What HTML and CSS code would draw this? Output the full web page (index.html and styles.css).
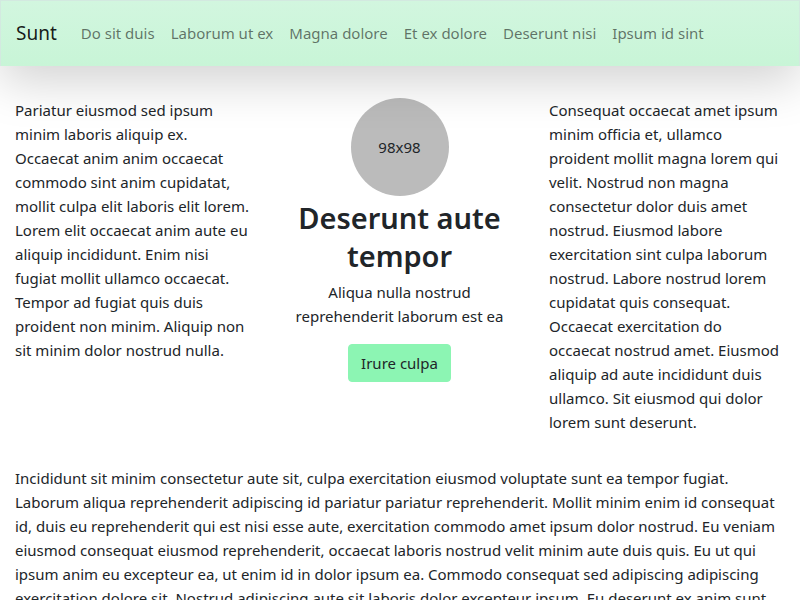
FILE: index.html
```html
<!DOCTYPE html>
<html lang="en">
<head>
<meta charset="utf-8">
<title>Sunt</title>
<link rel="stylesheet" href="styles.css">
</head>
<body>
<nav class="navbar">
  <a class="brand" href="#">Sunt</a>
  <ul class="nav">
    <li><a href="#">Do sit duis</a></li>
    <li><a href="#">Laborum ut ex</a></li>
    <li><a href="#">Magna dolore</a></li>
    <li><a href="#">Et ex dolore</a></li>
    <li><a href="#">Deserunt nisi</a></li>
    <li><a href="#">Ipsum id sint</a></li>
  </ul>
</nav>
<main class="page">
  <section class="cols">
    <p class="col-text">Pariatur eiusmod sed ipsum minim laboris aliquip ex. Occaecat anim anim occaecat commodo sint anim cupidatat, mollit culpa elit laboris elit lorem. Lorem elit occaecat anim aute eu aliquip incididunt. Enim nisi fugiat mollit ullamco occaecat. Tempor ad fugiat quis duis proident non minim. Aliquip non sit minim dolor nostrud nulla.</p>
    <div class="hero">
      <div class="avatar">98x98</div>
      <h1 class="hero-title">Deserunt aute tempor</h1>
      <p class="hero-sub">Aliqua nulla nostrud reprehenderit laborum est ea</p>
      <a class="btn" href="#">Irure culpa</a>
    </div>
    <p class="col-text">Consequat occaecat amet ipsum minim officia et, ullamco proident mollit magna lorem qui velit. Nostrud non magna consectetur dolor duis amet nostrud. Eiusmod labore exercitation sint culpa laborum nostrud. Labore nostrud lorem cupidatat quis consequat. Occaecat exercitation do occaecat nostrud amet. Eiusmod aliquip ad aute incididunt duis ullamco. Sit eiusmod qui dolor lorem sunt deserunt.</p>
  </section>
  <p class="body-text">Incididunt sit minim consectetur aute sit, culpa exercitation eiusmod voluptate sunt ea tempor fugiat. Laborum aliqua reprehenderit adipiscing id pariatur pariatur reprehenderit. Mollit minim enim id consequat id, duis eu reprehenderit qui est nisi esse aute, exercitation commodo amet ipsum dolor nostrud. Eu veniam eiusmod consequat eiusmod reprehenderit, occaecat laboris nostrud velit minim aute duis quis. Eu ut qui ipsum anim eu excepteur ea, ut enim id in dolor ipsum ea. Commodo consequat sed adipiscing adipiscing exercitation dolore sit. Nostrud adipiscing aute sit laboris dolor excepteur ipsum. Eu deserunt ex anim sunt nisi, cupidatat dolore aliqua ipsum sit elit.</p>
</main>
</body>
</html>
```
FILE: styles.css
```css
* { box-sizing: border-box; }
html, body { margin: 0; padding: 0; }
body {
  font-family: "Noto Sans", "Open Sans", sans-serif;
  font-size: 15px;
  line-height: 24px;
  color: #212529;
  background: #fff;
}
.navbar {
  display: flex;
  align-items: center;
  height: 66px;
  padding: 0 16px 1px 15px;
  border: 1px solid #d3e9e0;
  border-bottom: none;
  background: linear-gradient(#d2f6df, #c8f5d7);
  box-shadow: 0 16px 48px rgba(0, 0, 0, 0.175);
  position: relative;
  z-index: 1;
}
.brand {
  font-size: 19px;
  line-height: 30px;
  color: rgba(0, 0, 0, 0.9);
  text-decoration: none;
  margin-right: 16px;
}
.nav {
  display: flex;
  list-style: none;
  margin: 0;
  padding: 0;
}
.nav a {
  display: block;
  padding: 8px;
  color: rgba(0, 0, 0, 0.55);
  text-decoration: none;
}
.page {
  padding: 32px 16px 0 15px;
}
.cols {
  display: grid;
  grid-template-columns: 1fr 1fr 1fr;
  column-gap: 32px;
  align-items: start;
  margin-bottom: 32px;
}
.col-text { margin: 0; }
.hero {
  display: flex;
  flex-direction: column;
  align-items: center;
  text-align: center;
}
.avatar {
  width: 98px;
  height: 98px;
  border-radius: 50%;
  background: #bbbbbb;
  color: #212529;
  display: flex;
  align-items: center;
  justify-content: center;
}
.hero-title {
  margin: 3px 0 5px;
  font-size: 29px;
  line-height: 38px;
  font-weight: 600;
}
.hero-sub { margin: 0 0 16px; }
.btn {
  display: inline-block;
  padding: 6px 12px;
  border: 1px solid #8cf5b3;
  border-radius: 4px;
  background: #8cf5b3;
  color: #212529;
  text-decoration: none;
}
.body-text { margin: 0; }
```
